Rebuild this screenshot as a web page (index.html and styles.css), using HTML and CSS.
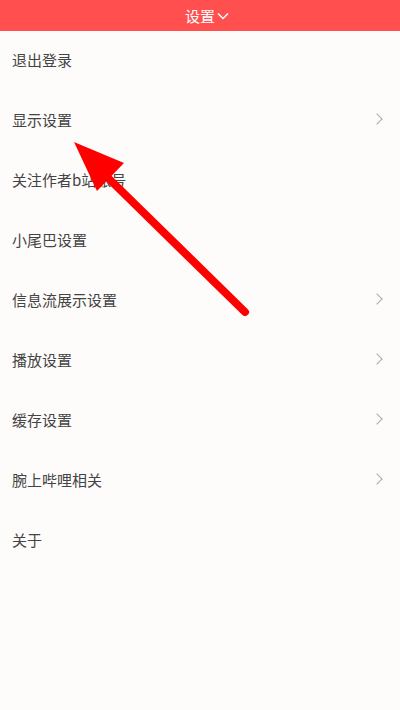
FILE: index.html
```html
<!DOCTYPE html>
<html lang="zh">
<head>
    <meta charset="UTF-8">
    <meta name="viewport" content="width=device-width, initial-scale=1.0">
    <title>设置</title>
    <link rel="stylesheet" href="styles.css">
</head>
<body>
    <div class="top-bar">
        <span class="title">设置</span>
        <svg class="title-arrow" width="12" height="8" viewBox="0 0 12 8"><path d="M1 1.5 L6 6.5 L11 1.5" fill="none" stroke="#fff" stroke-width="1.5"/></svg>
    </div>

    <!-- 设置列表 -->
    <ul class="menu">
        <li class="menu-item">退出登录</li>
        <li class="menu-item more">显示设置</li>
        <li class="menu-item">关注作者b站账号</li>
        <li class="menu-item">小尾巴设置</li>
        <li class="menu-item more">信息流展示设置</li>
        <li class="menu-item more">播放设置</li>
        <li class="menu-item more">缓存设置</li>
        <li class="menu-item more">腕上哔哩相关</li>
        <li class="menu-item">关于</li>
    </ul>

    <!-- 红色箭头标注 -->
    <svg class="pointer" width="400" height="710" viewBox="0 0 400 710">
        <line x1="245" y1="312" x2="100" y2="170" stroke="#ff0000" stroke-width="8" stroke-linecap="round"/>
        <polygon points="74,142 124,163 97,191" fill="#ff0000"/>
    </svg>
</body>
</html>
```

FILE: styles.css
```css
body {
    margin: 0;
    background-color: #fefcfb;
    font-family: "Noto Sans CJK SC", "Noto Sans", sans-serif;
    color: #444;
    height: 710px;
    position: relative;
    overflow: hidden;
}

.top-bar {
    height: 31px;
    background-color: #ff4f4f;
    display: flex;
    justify-content: center;
    align-items: center;
    color: #fff;
    font-size: 15px;
    padding-left: 14px;
}

.title-arrow {
    margin-left: 2px;
    margin-top: 1px;
}

.menu {
    list-style: none;
    margin: 0;
    padding: 0;
}

.menu-item {
    height: 60px;
    display: flex;
    align-items: center;
    padding: 0 12px 4px;
    box-sizing: border-box;
    font-size: 15px;
    position: relative;
}

.menu-item.more::after {
    content: "";
    position: absolute;
    right: 19px;
    top: 24px;
    width: 7px;
    height: 7px;
    border-top: 1.3px solid #aaa;
    border-right: 1.3px solid #aaa;
    transform: rotate(45deg);
}

.pointer {
    position: absolute;
    left: 0;
    top: 0;
    pointer-events: none;
}
```
